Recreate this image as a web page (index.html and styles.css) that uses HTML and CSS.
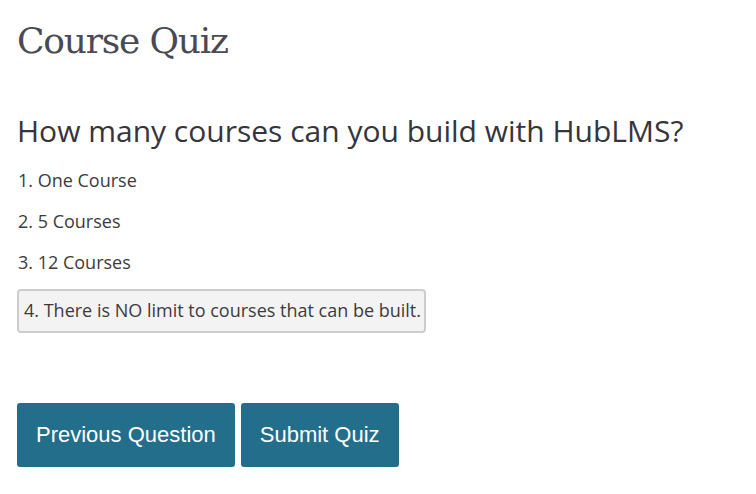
FILE: index.html
```html
<!DOCTYPE html>
<html>
<head>
<meta charset="utf-8">
<link rel="stylesheet" href="styles.css">
</head>
<body>
<div class="quiz">
  <h1 class="title">Course Quiz</h1>
  <h2 class="question">How many courses can you build with HubLMS?</h2>
  <ul class="answers">
    <li class="answer">1. One Course</li>
    <li class="answer">2. 5 Courses</li>
    <li class="answer">3. 12 Courses</li>
    <li class="answer selected">4. There is NO limit to courses that can be built.</li>
  </ul>
  <div class="actions">
    <button class="btn">Previous Question</button>
    <button class="btn">Submit Quiz</button>
  </div>
</div>
</body>
</html>
```
FILE: styles.css
```css
html, body {
  margin: 0;
  padding: 0;
  background: #ffffff;
}
.quiz {
  padding: 18px 17px;
  color: #3b3b41;
  font-family: "Open Sans", "DejaVu Sans", sans-serif;
}
.title {
  margin: 0;
  font-family: "DejaVu Serif", serif;
  font-weight: 400;
  font-size: 36px;
  line-height: 46px;
  letter-spacing: -1.2px;
  color: #4a4a52;
}
.question {
  margin: 49px 0 0;
  font-weight: 400;
  font-size: 30px;
  line-height: 36px;
  color: #35353b;
}
.answers {
  list-style: none;
  margin: 19px 0 0;
  padding: 0;
  display: flex;
  flex-direction: column;
  align-items: flex-start;
  gap: 17px;
}
.answer {
  font-size: 18px;
  line-height: 24px;
  padding: 0 1px;
}
.selected {
  margin-top: -2px;
  padding: 7px 3px 9px 5px;
  background: #f3f3f3;
  border: 2px solid #cdcdcd;
  border-radius: 4px;
}
.actions {
  margin-top: 70px;
  display: flex;
  gap: 6px;
}
.btn {
  height: 64px;
  padding: 0 19px;
  border: none;
  border-radius: 3px;
  background: #236e8b;
  color: #ffffff;
  font-family: "Liberation Sans", Arial, sans-serif;
  font-size: 22px;
}
```
